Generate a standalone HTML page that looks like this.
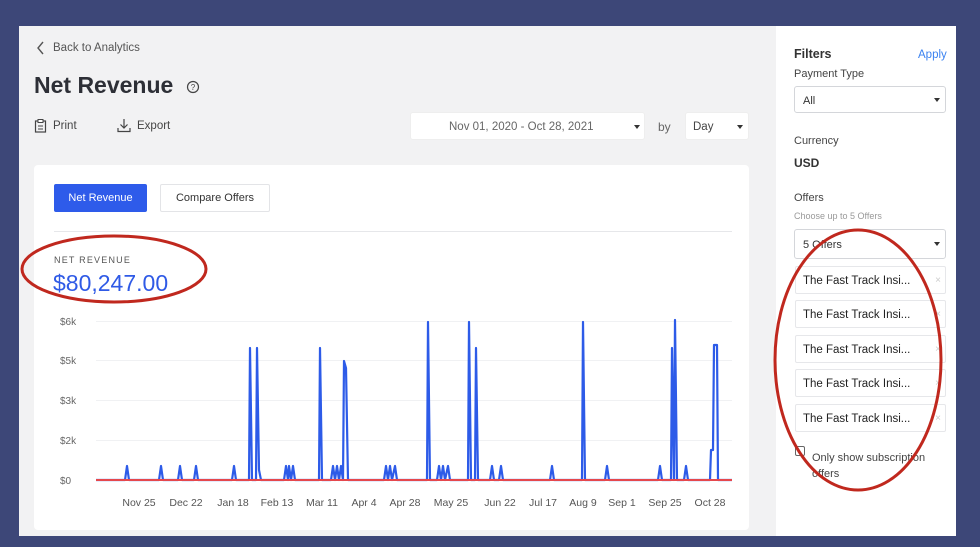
<!DOCTYPE html>
<html><head><meta charset="utf-8"><style>
*{margin:0;padding:0;box-sizing:border-box}
body{width:980px;height:547px;background:#3d4778;position:relative;overflow:hidden;font-family:"Liberation Sans",sans-serif;color:#333}
.abs{position:absolute}
#main{left:19px;top:26px;width:757px;height:510px;background:#f2f2f3}
#side{left:776px;top:26px;width:180px;height:510px;background:#fff}
.t{position:absolute;white-space:nowrap}
.sel{position:absolute;background:#fff;border:1px solid #d4d6da;border-radius:3px}
.caret{position:absolute;width:0;height:0;border-left:3.5px solid transparent;border-right:3.5px solid transparent;border-top:4px solid #333}
.chip{position:absolute;left:795px;width:151px;height:28px;background:#fff;border:1px solid #e6e7ea;border-radius:2px;font-size:11.5px;color:#222;padding:8px 0 0 7px}
.chip span{position:absolute;right:4px;top:8px;color:#ccc;font-size:10px}
.xl{position:absolute;top:497px;font-size:10.5px;color:#555;transform:translateX(-50%)}
.yl{position:absolute;left:60px;font-size:10px;color:#666}
</style></head><body>
<div class="abs" id="main"></div>
<div class="abs" id="side"></div>
<svg class="abs" style="left:36px;top:41px" width="10" height="14"><path d="M7 1 L2 7 L7 13" fill="none" stroke="#555" stroke-width="1.4"/></svg>
<div class="t" style="left:53px;top:42px;font-size:11.5px;color:#555">Back to Analytics</div>
<div class="t" style="left:34px;top:72px;font-size:23px;font-weight:bold;color:#2d2f36">Net Revenue</div>
<svg class="abs" style="left:186px;top:80px" width="14" height="14"><circle cx="7" cy="7" r="5.5" fill="none" stroke="#444" stroke-width="1.2"/><text x="7" y="10" font-size="8" text-anchor="middle" fill="#444" font-family="Liberation Sans">?</text></svg>
<svg class="abs" style="left:34px;top:119px" width="13" height="14"><rect x="1.5" y="2" width="10" height="11" fill="none" stroke="#444" stroke-width="1.2"/><rect x="4" y="0.5" width="5" height="3" fill="#fff" stroke="#444"/><path d="M4 7h5M4 10h5" stroke="#444"/></svg>
<div class="t" style="left:53px;top:120px;font-size:11.5px;color:#444">Print</div>
<svg class="abs" style="left:117px;top:118px" width="14" height="15"><path d="M7 1v9M3.5 6.5 7 10l3.5-3.5M1 10v3.5h12V10" fill="none" stroke="#444" stroke-width="1.2"/></svg>
<div class="t" style="left:137px;top:120px;font-size:11.5px;color:#444">Export</div>
<div class="sel" style="left:410px;top:112px;width:235px;height:28px;border-color:#eee"></div>
<div class="t" style="left:449px;top:121px;font-size:11.5px;color:#666">Nov 01, 2020 - Oct 28, 2021</div>
<div class="caret" style="left:634px;top:125px"></div>
<div class="t" style="left:658px;top:120px;font-size:12px;color:#666">by</div>
<div class="sel" style="left:685px;top:112px;width:64px;height:28px;border-color:#eee"></div>
<div class="t" style="left:693px;top:121px;font-size:11.5px;color:#444">Day</div>
<div class="caret" style="left:737px;top:125px"></div>
<div class="abs" style="left:34px;top:165px;width:715px;height:365px;background:#fff;border-radius:4px"></div>
<div class="abs" style="left:54px;top:184px;width:93px;height:28px;background:#2e5bea;border-radius:2px;color:#fff;font-size:11px;text-align:center;line-height:29px">Net Revenue</div>
<div class="abs" style="left:160px;top:184px;width:110px;height:28px;background:#fff;border:1px solid #e3e4e7;border-radius:2px;color:#333;font-size:11px;text-align:center;line-height:27px">Compare Offers</div>
<div class="abs" style="left:54px;top:231px;width:678px;height:1px;background:#e6e7ea"></div>
<div class="t" style="left:54px;top:255px;font-size:9px;letter-spacing:1.2px;color:#555">NET REVENUE</div>
<div class="t" style="left:53px;top:270px;font-size:23px;color:#2f5ae6">$80,247.00</div>
<div class="yl" style="top:317px">$6k</div><div class="yl" style="top:356px">$5k</div><div class="yl" style="top:396px">$3k</div><div class="yl" style="top:436px">$2k</div><div class="yl" style="top:476px">$0</div>
<svg class="abs" style="left:0;top:0" width="980" height="547">
<g stroke="#f0f1f3" stroke-width="1"><path d="M96 321.5H732M96 360.5H732M96 400.5H732M96 440.5H732"/></g>
<path fill="none" stroke="#2d5be8" stroke-width="2.2" stroke-linejoin="round" d="M96 480 L125 480 L127 466 L129 480 L159 480 L161 466 L163 480 L178 480 L180 466 L182 480 L194 480 L196 466 L198 480 L232 480 L234 466 L236 480 L249 480 L250 348 L252 480 L256 480 L257 348 L259 470 L261 480 L284 480 L286 466 L288 480 L289 466 L291 480 L293 466 L295 480 L319 480 L320 348 L322 480 L331 480 L333 466 L335 480 L337 466 L339 480 L341 466 L343 480 L344 361 L346 368 L348 480 L384 480 L386 466 L388 480 L390 466 L392 480 L395 466 L397 480 L427 480 L428 322 L430 480 L437 480 L439 466 L441 480 L443 466 L445 480 L448 466 L450 480 L468 480 L469 322 L471 480 L475 480 L476 348 L478 480 L490 480 L492 466 L494 480 L499 480 L501 466 L503 480 L550 480 L552 466 L554 480 L582 480 L583 322 L585 480 L605 480 L607 466 L609 480 L658 480 L660 466 L662 480 L671 480 L672 348 L674 480 L675 320 L677 480 L684 480 L686 466 L688 480 L710 480 L711 450 L713 450 L714 345 L717 345 L718 480 L732 480"/>
<path d="M96 480H732" stroke="#e5484d" stroke-width="2"/>
</svg>
<div class="xl" style="left:139px">Nov 25</div><div class="xl" style="left:186px">Dec 22</div><div class="xl" style="left:233px">Jan 18</div><div class="xl" style="left:277px">Feb 13</div><div class="xl" style="left:322px">Mar 11</div><div class="xl" style="left:364px">Apr 4</div><div class="xl" style="left:405px">Apr 28</div><div class="xl" style="left:451px">May 25</div><div class="xl" style="left:500px">Jun 22</div><div class="xl" style="left:543px">Jul 17</div><div class="xl" style="left:583px">Aug 9</div><div class="xl" style="left:622px">Sep 1</div><div class="xl" style="left:665px">Sep 25</div><div class="xl" style="left:710px">Oct 28</div>
<div class="t" style="left:794px;top:47px;font-size:12.5px;font-weight:bold;color:#333">Filters</div>
<div class="t" style="left:918px;top:49px;font-size:11.5px;color:#3b82f0">Apply</div>
<div class="t" style="left:794px;top:68px;font-size:11px;color:#444">Payment Type</div>
<div class="sel" style="left:794px;top:86px;width:152px;height:27px"></div>
<div class="t" style="left:803px;top:95px;font-size:11px;color:#333">All</div>
<div class="caret" style="left:934px;top:98px"></div>
<div class="t" style="left:794px;top:135px;font-size:11px;color:#444">Currency</div>
<div class="t" style="left:794px;top:156px;font-size:12px;font-weight:bold;color:#333">USD</div>
<div class="t" style="left:794px;top:192px;font-size:11px;color:#444">Offers</div>
<div class="t" style="left:794px;top:211px;font-size:9px;color:#999">Choose up to 5 Offers</div>
<div class="sel" style="left:794px;top:229px;width:152px;height:30px"></div>
<div class="t" style="left:803px;top:239px;font-size:11px;color:#333">5 Offers</div>
<div class="caret" style="left:934px;top:242px"></div>
<div class="chip" style="top:266px">The Fast Track Insi...<span>×</span></div>
<div class="chip" style="top:300px">The Fast Track Insi...<span>×</span></div>
<div class="chip" style="top:335px">The Fast Track Insi...<span>×</span></div>
<div class="chip" style="top:369px">The Fast Track Insi...<span>×</span></div>
<div class="chip" style="top:404px">The Fast Track Insi...<span>×</span></div>
<div class="abs" style="left:795px;top:446px;width:10px;height:10px;border:1px solid #666;border-radius:2px"></div>
<div class="t" style="left:812px;top:450px;font-size:11px;color:#444;line-height:16px">Only show subscription<br>offers</div>
<svg class="abs" style="left:0;top:0;z-index:5" width="980" height="547">
<ellipse cx="114" cy="269" rx="92" ry="33" fill="none" stroke="#c0281e" stroke-width="3"/>
<ellipse cx="858" cy="360" rx="83" ry="130" fill="none" stroke="#c0281e" stroke-width="3"/>
</svg>
</body></html>
